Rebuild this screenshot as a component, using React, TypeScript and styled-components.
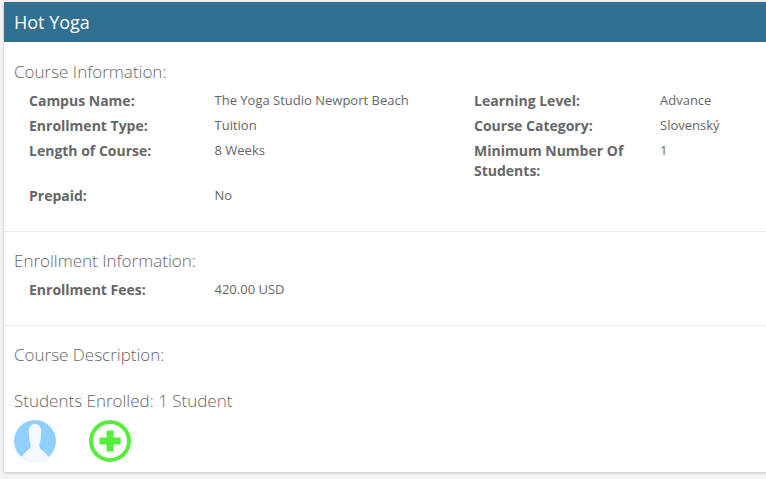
import { FC, Fragment } from 'react';
import styled, { createGlobalStyle } from 'styled-components';

const GlobalStyle = createGlobalStyle`
	html, body {
		margin: 0;
		padding: 0;
		height: 479px;
		overflow: hidden;
		background: #f4f4f4;
		font-family: 'Open Sans', 'Liberation Sans', sans-serif;
	}
`;

const Page = styled.div`
	width: 766px;
	height: 479px;
	padding: 2px 0 0 4px;
	box-sizing: border-box;
	overflow: hidden;
`;

const Card = styled.section`
	width: 764px;
	height: 470px;
	background: #fff;
	box-shadow: 0 1px 3px rgba(0, 0, 0, 0.2);
`;

const Header = styled.header`
	height: 40px;
	background: #317090;
	color: #fff;
	font-size: 18px;
	line-height: 40px;
	padding-left: 10px;
`;

const Section = styled.div<{ $top: number }>`
	padding: ${p => p.$top}px 0 25px 10px;
	border-bottom: 1px solid #ececec;
`;

const Plain = styled.div<{ $top: number }>`
	padding: ${p => p.$top}px 0 0 10px;
`;

const Heading = styled.h3`
	margin: 0;
	font-size: 17px;
	font-weight: 300;
	line-height: 22px;
	color: #666;
`;

const InfoGrid = styled.div`
	display: grid;
	grid-template-columns: 185.500px 259.500px 186px 1fr;
	padding: 8px 0 0 15px;
	row-gap: 5px;
`;

const Label = styled.div`
	font-size: 14px;
	font-weight: 700;
	line-height: 20px;
	color: #666;
`;

const Value = styled.div`
	font-size: 13px;
	line-height: 18px;
	color: #666;
`;

const Avatars = styled.div`
	display: flex;
	gap: 33px;
	padding-top: 8px;
`;

const Avatar: FC = () => (
	<svg width="42" height="42" viewBox="0 0 42 42">
		<defs>
			<clipPath id="avatar-clip">
				<circle cx="21" cy="21" r="21" />
			</clipPath>
		</defs>
		<circle cx="21" cy="21" r="21" fill="#90d0ff" />
		<path
			clipPath="url(#avatar-clip)"
			d="M21 4c-4 0-6.200 3-6.200 7.500 0 5 .7 9.500 1.700 12.500.6 2.500-.4 4.500-2.800 6.500-2.200 1.800-4.200 3.500-6.200 6.500l2 5h23l2-5c-2-3-4-4.700-6.200-6.500-2.400-2-3.400-4-2.800-6.500 1-3 1.700-7.500 1.700-12.500 0-4.500-2.200-7.500-6.200-7.500z"
			fill="#f3f9ff"
		/>
	</svg>
);

const AddButton: FC = () => (
	<svg width="42" height="42" viewBox="0 0 42 42">
		<circle cx="21" cy="21" r="19" fill="#fff" stroke="#55ee3c" strokeWidth="4" />
		<path d="M17.500 10.500h7v7h7v7h-7v7h-7v-7h-7v-7h7z" fill="#55ee3c" />
	</svg>
);

const courseInfo = [
	['Campus Name:', 'The Yoga Studio Newport Beach', 'Learning Level:', 'Advance'],
	['Enrollment Type:', 'Tuition', 'Course Category:', 'Slovenský'],
	['Length of Course:', '8 Weeks', 'Minimum Number Of Students:', '1'],
	['Prepaid:', 'No', '', ''],
];

export default function App() {
	return (
		<>
			<GlobalStyle />
			<Page>
				<Card>
					<Header>Hot Yoga</Header>
					<Section $top={19}>
						<Heading>Course Information:</Heading>
						<InfoGrid>
							{courseInfo.map(row => (
								<Fragment key={row[0]}>
									<Label>{row[0]}</Label>
									<Value>{row[1]}</Value>
									<Label>{row[2]}</Label>
									<Value>{row[3]}</Value>
								</Fragment>
							))}
						</InfoGrid>
					</Section>
					<Section $top={18}>
						<Heading>Enrollment Information:</Heading>
						<InfoGrid>
							<Label>Enrollment Fees:</Label>
							<Value>420.00 USD</Value>
						</InfoGrid>
					</Section>
					<Plain $top={18}>
						<Heading>Course Description:</Heading>
					</Plain>
					<Plain $top={24}>
						<Heading>Students Enrolled: 1 Student</Heading>
						<Avatars>
							<Avatar />
							<AddButton />
						</Avatars>
					</Plain>
				</Card>
			</Page>
		</>
	);
}
